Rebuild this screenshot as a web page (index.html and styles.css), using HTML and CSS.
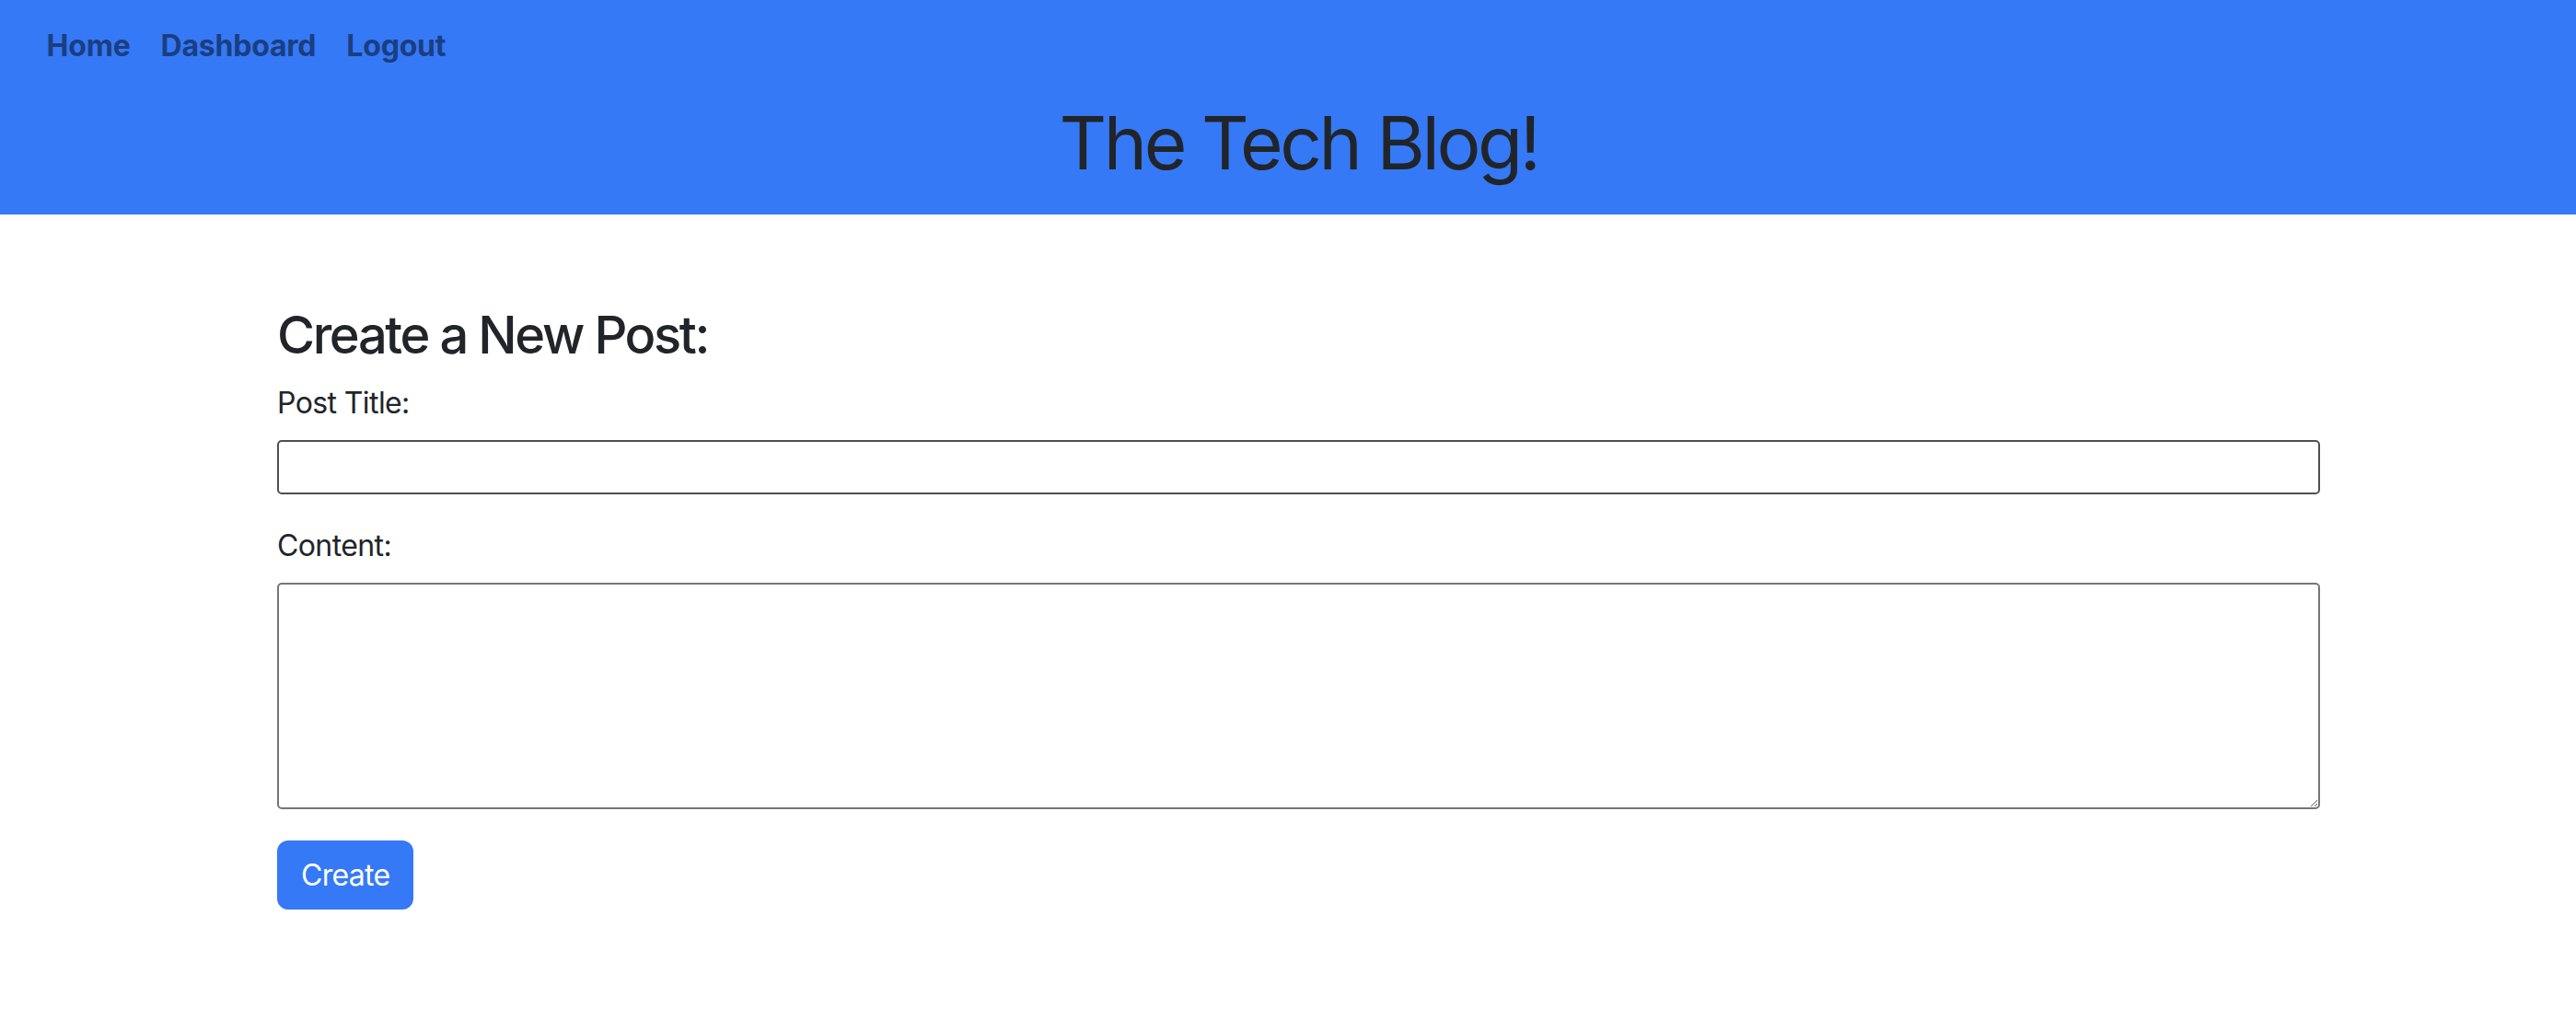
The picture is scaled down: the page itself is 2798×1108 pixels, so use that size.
FILE: index.html
```html
<!DOCTYPE html>
<html lang="en">
<head>
<meta charset="utf-8">
<title>The Tech Blog!</title>
<link rel="stylesheet" href="styles.css">
</head>
<body>
<header class="site-header">
  <nav class="nav">
    <a class="nav-link" href="#">Home</a>
    <a class="nav-link" href="#">Dashboard</a>
    <a class="nav-link" href="#">Logout</a>
  </nav>
  <div class="container">
    <h1 class="site-title">The Tech Blog!</h1>
  </div>
</header>
<main class="container main">
  <h3 class="form-heading">Create a New Post:</h3>
  <form class="post-form">
    <label class="form-label" for="post-title">Post Title:</label>
    <input class="text-input" id="post-title" type="text">
    <label class="form-label" for="post-content">Content:</label>
    <textarea class="text-area" id="post-content"></textarea>
    <button class="btn-primary" type="submit">Create</button>
  </form>
</main>
</body>
</html>
```

FILE: styles.css
```css
* { box-sizing: border-box; }

html, body {
  margin: 0;
  padding: 0;
}

body {
  font-family: Inter, "Noto Sans", "Liberation Sans", sans-serif;
  font-size: 32px;
  line-height: 1.5;
  color: #212529;
  background: #ffffff;
}

.site-header {
  background: #3579f6;
  padding-bottom: 30px;
}

.nav {
  display: flex;
  padding: 10px 0 0 34px;
}

.nav-link {
  display: block;
  padding: 16px 16.5px;
  font-weight: 700;
  font-size: 32px;
  line-height: 48px;
  color: #1b3e82;
  text-decoration: none;
  letter-spacing: -0.2px;
}

.container {
  margin-left: 301px;
  width: 2219px;
}

.site-title {
  margin: 17px 0 0 0;
  text-align: center;
  font-size: 80px;
  font-weight: 400;
  line-height: 1.2;
  letter-spacing: -3.4px;
  color: #212529;
}

.main {
  padding-top: 98px;
}

.form-heading {
  margin: 0 0 16px 0;
  font-size: 56px;
  font-weight: 500;
  line-height: 1.2;
  letter-spacing: -2.4px;
}

.post-form {
  display: flex;
  flex-direction: column;
  align-items: flex-start;
}

.form-label {
  display: block;
  margin-bottom: 16px;
  font-size: 32px;
  line-height: 48px;
  letter-spacing: -0.6px;
}

.text-input {
  width: 100%;
  height: 59px;
  margin: 0 0 32px 0;
  border: 2px solid #4f4f4f;
  border-radius: 5px;
  font-family: inherit;
  font-size: 28px;
  padding: 2px 6px;
  background: #fff;
}

.text-area {
  width: 100%;
  height: 246px;
  margin: 0 0 34px 0;
  border: 2px solid #767676;
  border-radius: 5px;
  font-family: inherit;
  font-size: 28px;
  padding: 4px 6px;
  background: #fff;
}

.btn-primary {
  display: inline-block;
  height: 75px;
  padding: 0 24px;
  border: 2px solid #3579f6;
  border-radius: 12px;
  background: #3579f6;
  color: #ffffff;
  font-family: inherit;
  font-size: 32px;
  line-height: 48px;
  letter-spacing: -0.7px;
  cursor: pointer;
}
```
